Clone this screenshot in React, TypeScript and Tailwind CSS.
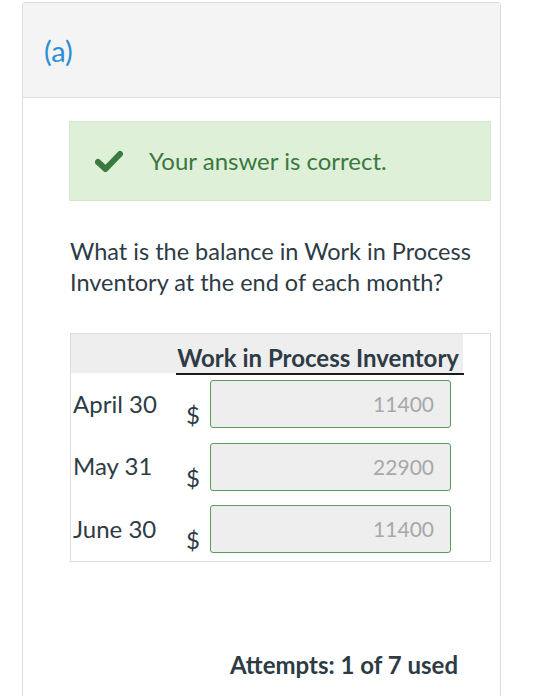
import React from "react";

const rows = [
  { label: "April 30", value: "11400" },
  { label: "May 31", value: "22900" },
  { label: "June 30", value: "11400" },
];

export default function App() {
  return (
    <div className="w-[560px] h-[696px] bg-white overflow-hidden" style={{ fontFamily: "Lato, 'Open Sans', sans-serif" }}>
      <div className="ml-[22px] mt-[2px] w-[479px] h-[720px] border border-[#dcdcdc] rounded-t-[3px]">
        <div className="h-[95px] bg-[#f4f4f4] border-b border-[#dcdcdc] flex items-center pl-[21px]">
          <span className="text-[29px] text-[#2a8fd4] leading-none">(a)</span>
        </div>
        <div className="pl-[46px] pr-[9px]">
          <div className="mt-[23px] h-[80px] bg-[#dff0d8] border border-[#d3e8c9] flex items-center pl-[25px]">
            <svg width="28" height="22" viewBox="0 0 28 22" className="shrink-0">
              <path d="M3 12 L10.5 19 L25 4" fill="none" stroke="#3a7a3e" strokeWidth="6" strokeLinecap="round" strokeLinejoin="round" />
            </svg>
            <span className="ml-[26px] text-[24px] text-[#3b7840]">Your answer is correct.</span>
          </div>
          <p className="mt-[35px] text-[23.5px] leading-[31px] text-[#2d3b45] pl-[1px]">
            What is the balance in Work in Process Inventory at the end of each month?
          </p>
          <div className="mt-[35px] ml-[1px] w-[421px] border border-[#dcdcdc]">
            <div className="flex">
              <div className="w-[392px] h-[39px] bg-[#eeeeee] flex">
                <div className="w-[105px]" />
                <div className="flex-1 flex items-end justify-end pr-[4px]">
                  <span className="text-[24px] font-bold text-[#2d3b45] leading-[30px]">Work in Process Inventory</span>
                </div>
              </div>
            </div>
            <div className="ml-[105px] w-[288px] h-[2px] bg-[#1a1a1a]" />
            <div className="pt-[5px] pb-[8px]">
              {rows.map((r, i) => (
                <div key={i} className={`flex items-center h-[48px] ${i > 0 ? "mt-[14.5px]" : ""}`}>
                  <div className="w-[105px] pl-[2px] text-[24px] text-[#2d3b45] leading-none pb-[1px]">{r.label}</div>
                  <div className="w-[34px] self-end pl-[10px] text-[24px] text-[#2d3b45] leading-none mb-[1px]">$</div>
                  <div className="w-[241px] h-[48px] bg-[#eeeeee] border border-[#5d9a5f] rounded-[3px] flex items-center justify-end pr-[16px] text-[21px] text-[#a8a8a8]">
                    {r.value}
                  </div>
                </div>
              ))}
            </div>
          </div>
          <div className="mt-[85px] flex justify-end pr-[33px]">
            <span className="text-[24px] font-bold text-[#2d3b45]">Attempts: 1 of 7 used</span>
          </div>
        </div>
      </div>
    </div>
  );
}
